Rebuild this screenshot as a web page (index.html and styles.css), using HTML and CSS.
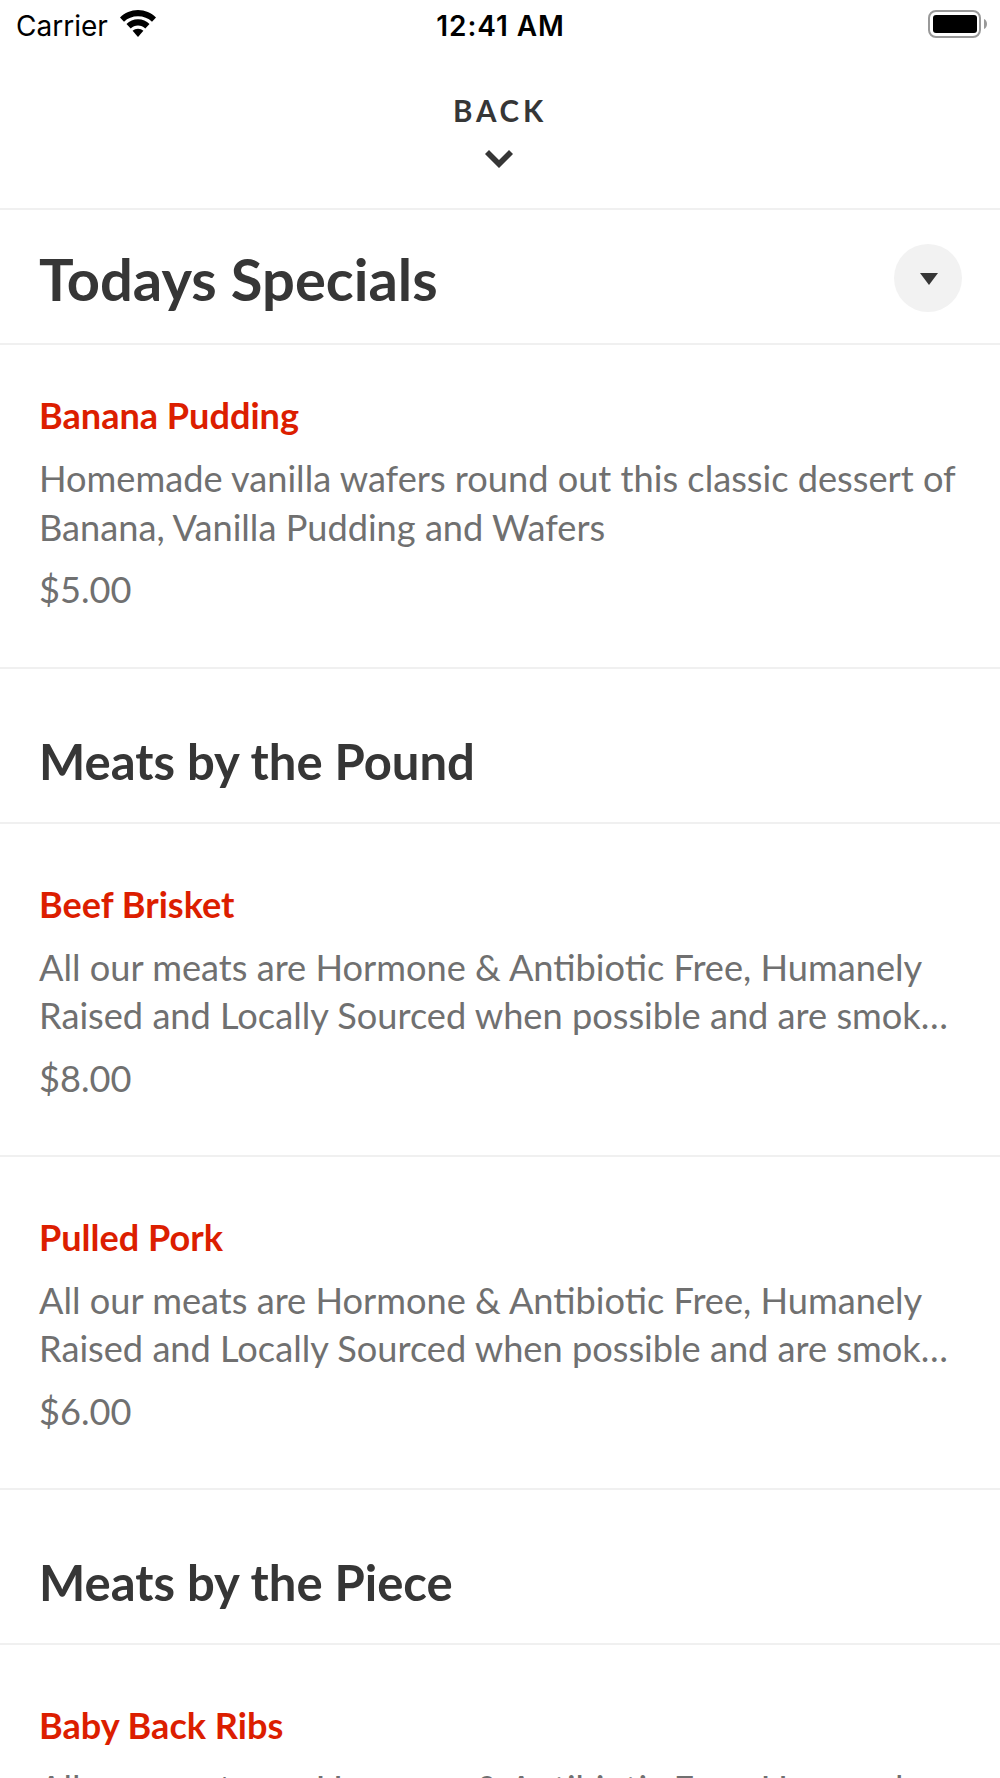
FILE: index.html
```html
<!DOCTYPE html>
<html lang="en">
<head>
  <meta charset="UTF-8">
  <meta name="viewport" content="width=device-width, initial-scale=1.0">
  <title>Todays Specials</title>
  <link rel="stylesheet" href="styles.css">
</head>
<body>
  <div class="status-bar">
    <div class="carrier">
      <span>Carrier</span>
      <svg class="wifi" viewBox="0 0 36 27" width="36" height="27">
        <path d="M18 0C11 0 4.800 2.800 0 7.500l4 4.200C7.700 8.300 12.500 6.300 18 6.300s10.300 2 14 5.400l4-4.200C31.200 2.800 25 0 18 0z"/>
        <path d="M18 9.300c-4.500 0-8.500 1.800-11.500 4.700l4.200 4.400c2-1.900 4.400-3 7.300-3s5.300 1.100 7.300 3l4.200-4.400c-3-2.900-7-4.700-11.500-4.700z"/>
        <path d="M18 18.700c-2.100 0-3.900.7-5.400 2L18 27l5.400-6.300c-1.500-1.300-3.300-2-5.400-2z"/>
      </svg>
    </div>
    <div class="time">12:41 AM</div>
    <svg class="battery" viewBox="0 0 60 28" width="60" height="28">
      <rect class="battery-case" x="1" y="1" width="51" height="26" rx="7"/>
      <rect x="5" y="5" width="44" height="18" rx="3"/>
      <path class="battery-tip" d="M56 9c4 1.500 4 8.500 0 10z"/>
    </svg>
  </div>

  <header class="back">
    <span>BACK</span>
    <svg viewBox="0 0 28 18" width="28" height="18">
      <path d="M0 4l4-4 10 10L24 0l4 4-14 14z"/>
    </svg>
  </header>

  <div class="title-bar">
    <h1>Todays Specials</h1>
    <button class="toggle" aria-label="Choose menu">
      <svg viewBox="0 0 18 12" width="18" height="12"><path d="M0 0h18L9 12z"/></svg>
    </button>
  </div>

  <div class="item first">
    <h3>Banana Pudding</h3>
    <p>Homemade vanilla wafers round out this classic dessert of<br>Banana, Vanilla Pudding and Wafers</p>
    <div class="price">$5.00</div>
  </div>

  <h2>Meats by the Pound</h2>
  <div class="item">
    <h3>Beef Brisket</h3>
    <p>All our meats are Hormone &amp; Antibiotic Free, Humanely<br>Raised and Locally Sourced when possible and are smok…</p>
    <div class="price">$8.00</div>
  </div>
  <div class="item">
    <h3>Pulled Pork</h3>
    <p>All our meats are Hormone &amp; Antibiotic Free, Humanely<br>Raised and Locally Sourced when possible and are smok…</p>
    <div class="price">$6.00</div>
  </div>

  <h2>Meats by the Piece</h2>
  <div class="item">
    <h3>Baby Back Ribs</h3>
    <p>All our meats are Hormone &amp; Antibiotic Free, Humanely</p>
  </div>
</body>
</html>
```
FILE: styles.css
```css
* {
  box-sizing: border-box;
}
html {
  overflow: hidden;
}
body {
  font-family: Lato, sans-serif;
  background: #fff;
  color: #363636;
  margin: 0;
  height: 1778px;
  overflow: hidden;
}
h1, h2, h3, p {
  margin: 0;
}
.status-bar {
  display: grid;
  grid-template-columns: 1fr auto 1fr;
  align-items: center;
  height: 50px;
  padding: 1px 12px 0 16px;
  font-family: Inter, sans-serif;
  font-size: 28px;
  color: #000;
}
.carrier {
  display: flex;
  align-items: center;
  gap: 12px;
}
.wifi {
  margin-bottom: 4px;
}
.time {
  margin-right: 3px;
  font-weight: 600;
  letter-spacing: 0.9px;
}
.battery {
  justify-self: end;
  margin-bottom: 3px;
}
.battery-case {
  fill: none;
  stroke: #999;
  stroke-width: 2;
}
.battery-tip {
  fill: #999;
}
.back {
  display: flex;
  flex-direction: column;
  align-items: center;
  height: 160px;
  padding-top: 43px;
  border-bottom: 2px solid #f0f0f0;
  font-size: 29.5px;
  line-height: 35px;
  font-weight: bold;
  letter-spacing: 3.8px;
}
.back svg {
  margin: 22px 3px 0 0;
  fill: #363636;
}
.title-bar {
  display: flex;
  align-items: center;
  justify-content: space-between;
  height: 135px;
  padding: 3px 38.5px 0 39px;
  border-bottom: 2px solid #f0f0f0;
}
h1 {
  padding-top: 2px;
  font-size: 57.9px;
  line-height: 70px;
}
.toggle {
  display: flex;
  align-items: center;
  justify-content: center;
  width: 68px;
  height: 68px;
  padding: 2px 0 0 2px;
  border: none;
  border-radius: 50%;
  background: #f2f2f2;
}
.toggle svg {
  fill: #363636;
}
.item {
  height: 333.3px;
  padding: 58px 39px 0;
  border-bottom: 2px solid #f0f0f0;
  white-space: nowrap;
}
.item.first {
  height: 324px;
  padding-top: 48px;
}
h3 {
  color: #dc1e00;
  font-size: 36.1px;
  line-height: 44px;
}
p, .price {
  color: #707070;
  font-size: 36.2px;
  line-height: 48.5px;
}
p {
  margin-top: 17px;
}
.price {
  margin-top: 14px;
}
h2 {
  height: 154.5px;
  padding: 63px 39px 0;
  border-bottom: 2px solid #f0f0f0;
  font-size: 49px;
  line-height: 58px;
}
```
